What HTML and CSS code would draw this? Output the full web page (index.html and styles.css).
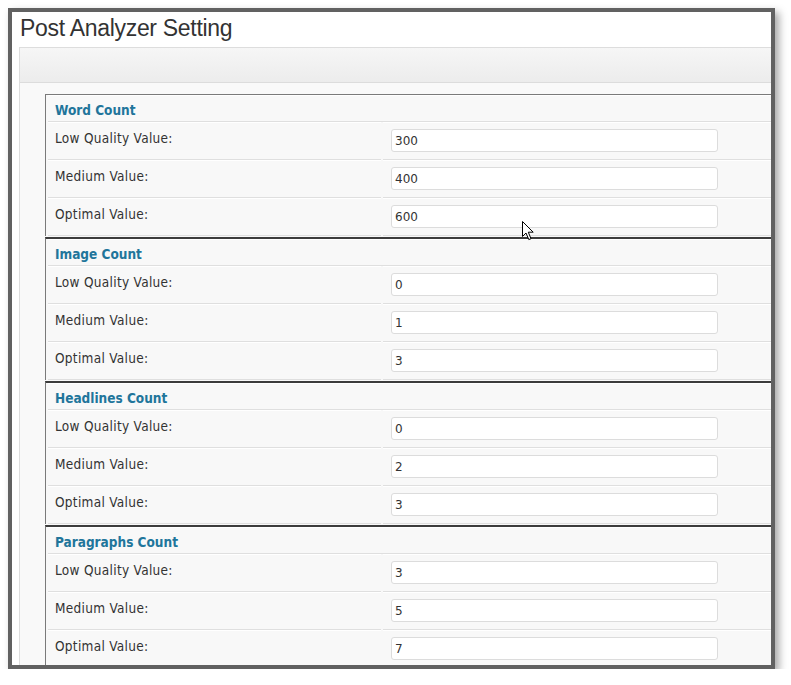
FILE: index.html
```html
<!DOCTYPE html>
<html>
<head>
<meta charset="utf-8">
<title>Post Analyzer Setting</title>
<link rel="stylesheet" href="styles.css">
</head>
<body>
<div class="frame">
  <h1 class="title">Post Analyzer Setting</h1>
  <div class="panel">
    <div class="panel-head"></div>
    <div class="panel-body">
      <table class="group">
        <tr><th colspan="2" class="group-title">Word Count</th></tr>
        <tr><td class="label">Low Quality Value:</td><td class="field"><input type="text" value="300"></td></tr>
        <tr><td class="label">Medium Value:</td><td class="field"><input type="text" value="400"></td></tr>
        <tr><td class="label">Optimal Value:</td><td class="field"><input type="text" value="600"></td></tr>
      </table>
      <table class="group">
        <tr><th colspan="2" class="group-title">Image Count</th></tr>
        <tr><td class="label">Low Quality Value:</td><td class="field"><input type="text" value="0"></td></tr>
        <tr><td class="label">Medium Value:</td><td class="field"><input type="text" value="1"></td></tr>
        <tr><td class="label">Optimal Value:</td><td class="field"><input type="text" value="3"></td></tr>
      </table>
      <table class="group">
        <tr><th colspan="2" class="group-title">Headlines Count</th></tr>
        <tr><td class="label">Low Quality Value:</td><td class="field"><input type="text" value="0"></td></tr>
        <tr><td class="label">Medium Value:</td><td class="field"><input type="text" value="2"></td></tr>
        <tr><td class="label">Optimal Value:</td><td class="field"><input type="text" value="3"></td></tr>
      </table>
      <table class="group">
        <tr><th colspan="2" class="group-title">Paragraphs Count</th></tr>
        <tr><td class="label">Low Quality Value:</td><td class="field"><input type="text" value="3"></td></tr>
        <tr><td class="label">Medium Value:</td><td class="field"><input type="text" value="5"></td></tr>
        <tr><td class="label">Optimal Value:</td><td class="field"><input type="text" value="7"></td></tr>
      </table>
    </div>
  </div>
  <svg class="cursor" width="14" height="20" viewBox="0 0 14 20">
    <path d="M0.5 0.5 L0.5 15.5 L4 12 L6.8 18.6 L9 17.7 L6.3 11.2 L11.2 11.2 Z" fill="#fff" stroke="#000" stroke-width="1" stroke-linejoin="miter"/>
  </svg>
</div>
</body>
</html>
```

FILE: styles.css
```css
html, body {
  margin: 0;
  padding: 0;
  background: #ffffff;
}

.frame {
  position: relative;
  margin: 8px 0 0 8px;
  width: 759px;
  height: 653px;
  border: 4px solid #616161;
  background: #ffffff;
  overflow: hidden;
  box-shadow: 4px 4px 8px rgba(0, 0, 0, 0.35);
}

.title {
  margin: 0 0 4px 0;
  padding: 1px 0 0 8px;
  font-family: "Liberation Sans", Arial, sans-serif;
  font-weight: normal;
  font-size: 23px;
  line-height: 30px;
  letter-spacing: -0.3px;
  color: #333333;
}

.panel {
  margin-left: 7px;
  width: 820px;
  border-top: 1px solid #dddddd;
  border-left: 1px solid #dddddd;
  background: #f9f9f9;
}

.panel-head {
  height: 34px;
  background: linear-gradient(#f6f6f6, #ececec);
  border-bottom: 1px solid #dcdcdc;
}

.panel-body {
  padding: 11px 0 0 25px;
}

.group {
  width: 790px;
  border-collapse: separate;
  border-spacing: 2px 0;
  border-left: 1px solid #7a7a7a;
  border-top: 1px solid #7a7a7a;
  background: #f8f8f8;
  font-family: "DejaVu Sans Condensed", "DejaVu Sans", Verdana, sans-serif;
  font-stretch: condensed;
  color: #333333;
}

.group + .group {
  margin-top: 1px;
  border-top: 2px solid #3c3c3c;
}

.group-title {
  height: 20px;
  padding: 5px 0 0 7px;
  text-align: left;
  font-size: 13.5px;
  line-height: 18px;
  font-weight: bold;
  color: #21759b;
  border-top: 1px solid #ffffff;
  border-bottom: 1px solid #dfdfdf;
  vertical-align: top;
  box-sizing: content-box;
}

.label,
.field {
  height: 36px;
  padding: 0;
  border-top: 1px solid #ffffff;
  border-bottom: 1px solid #dfdfdf;
  box-sizing: content-box;
}

.label {
  width: 326px;
  padding-left: 7px;
  font-size: 13.5px;
  line-height: 18px;
  letter-spacing: 0.3px;
  vertical-align: top;
}

.label::before {
  content: "";
  display: block;
  height: 6px;
}

.field {
  padding-left: 8px;
  vertical-align: top;
}

.field input {
  display: block;
  margin-top: 6px;
  width: 327px;
  height: 23px;
  box-sizing: border-box;
  padding: 0 3px;
  border: 1px solid #dcdcdc;
  border-radius: 3px;
  background: #ffffff;
  font-family: "DejaVu Sans", Verdana, sans-serif;
  font-size: 12px;
  color: #333333;
  outline: none;
}

.cursor {
  position: absolute;
  left: 510px;
  top: 209px;
}
```
